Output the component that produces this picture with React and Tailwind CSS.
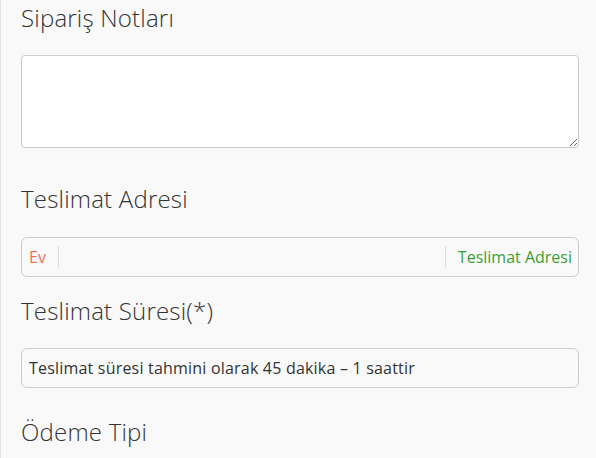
import React from 'react';

const headingClass = "text-[24px] font-light leading-[32px] text-[#333] tracking-[0.2px]";

const App = () => {
  return (
    <div className="min-h-[458px] w-[596px] overflow-hidden border-l border-[#e3e3e3] bg-[#f9f9f9] font-['Open_Sans','Noto_Sans',sans-serif]">
      <div className="pl-[20px] pr-[17px] pt-[2px]">
        {/* Sipariş Notları */}
        <h3 className={headingClass}>Sipariş Notları</h3>
        <textarea
          className="mt-[21px] block h-[93px] w-full resize-y rounded-[4px] border border-[#cccccc] bg-white px-3 py-2 text-[15px] text-[#333] outline-none"
        />

        {/* Teslimat Adresi */}
        <h3 className={`${headingClass} mt-[35px]`}>Teslimat Adresi</h3>
        <div className="mt-[22px] flex h-[40px] items-center rounded-[6px] border border-[#cccccc] bg-[#f9f9f9]">
          <span className="pl-[7px] pr-[12px] text-[16px] text-[#f2705a]">Ev</span>
          <span className="h-[22px] w-px bg-[#dddddd]" />
          <div className="flex-1" />
          <span className="h-[22px] w-px bg-[#dddddd]" />
          <span className="pl-[12px] pr-[6px] text-[16px] text-[#3c9f32]">Teslimat Adresi</span>
        </div>

        {/* Teslimat Süresi */}
        <h3 className={`${headingClass} mt-[18px]`}>Teslimat Süresi(*)</h3>
        <div className="mt-[21px] flex h-[40px] items-center rounded-[6px] border border-[#cccccc] bg-[#f9f9f9] px-[7px] text-[16px] tracking-[0.2px] text-[#333]">
          Teslimat süresi tahmini olarak 45 dakika – 1 saattir
        </div>

        {/* Ödeme Tipi */}
        <h3 className={`${headingClass} mt-[28px]`}>Ödeme Tipi</h3>
      </div>
    </div>
  );
};

export default App;
